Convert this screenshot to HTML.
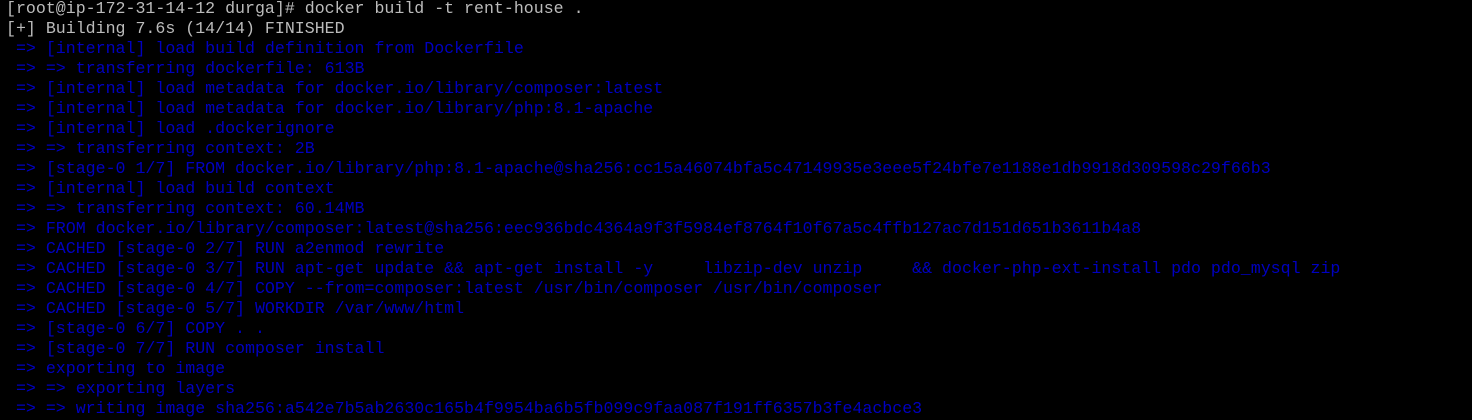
<!DOCTYPE html>
<html><head><meta charset="utf-8"><style>
html,body{margin:0;padding:0;background:#000;width:1472px;height:420px;overflow:hidden}
pre{margin:0;padding:0 0 0 6px;font-family:"Liberation Mono","Courier New",monospace;font-size:16.6px;line-height:20px;color:#bbbbbb;white-space:pre;position:relative;top:-1px}
.b{color:#0000c0}
</style></head><body><pre>[root@ip-172-31-14-12 durga]# docker build -t rent-house .
[+] Building 7.6s (14/14) FINISHED
<span class="b"> => [internal] load build definition from Dockerfile
 => => transferring dockerfile: 613B
 => [internal] load metadata for docker.io/library/composer:latest
 => [internal] load metadata for docker.io/library/php:8.1-apache
 => [internal] load .dockerignore
 => => transferring context: 2B
 => [stage-0 1/7] FROM docker.io/library/php:8.1-apache@sha256:cc15a46074bfa5c47149935e3eee5f24bfe7e1188e1db9918d309598c29f66b3
 => [internal] load build context
 => => transferring context: 60.14MB
 => FROM docker.io/library/composer:latest@sha256:eec936bdc4364a9f3f5984ef8764f10f67a5c4ffb127ac7d151d651b3611b4a8
 => CACHED [stage-0 2/7] RUN a2enmod rewrite
 => CACHED [stage-0 3/7] RUN apt-get update &amp;&amp; apt-get install -y     libzip-dev unzip     &amp;&amp; docker-php-ext-install pdo pdo_mysql zip
 => CACHED [stage-0 4/7] COPY --from=composer:latest /usr/bin/composer /usr/bin/composer
 => CACHED [stage-0 5/7] WORKDIR /var/www/html
 => [stage-0 6/7] COPY . .
 => [stage-0 7/7] RUN composer install
 => exporting to image
 => => exporting layers
 => => writing image sha256:a542e7b5ab2630c165b4f9954ba6b5fb099c9faa087f191ff6357b3fe4acbce3</span></pre></body></html>
